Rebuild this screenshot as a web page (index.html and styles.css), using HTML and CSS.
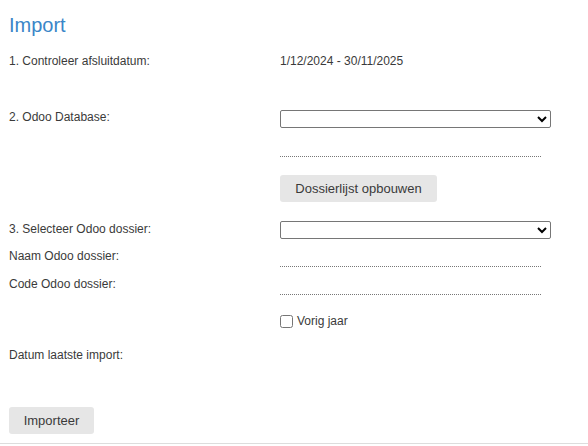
FILE: index.html
```html
<!DOCTYPE html>
<html>
<head>
  <title>Import</title>
  <link rel="stylesheet" href="styles.css">
</head>
<body>
  <div class="page">
    <h1 class="title">Import</h1>

    <div class="row row-date">
      <span class="label">1. Controleer afsluitdatum:</span>
      <span class="value">1/12/2024 - 30/11/2025</span>
    </div>

    <div class="row row-db">
      <span class="label">2. Odoo Database:</span>
      <select class="select"></select>
    </div>

    <div class="row row-dbname">
      <span class="label"></span>
      <div class="field field-short"></div>
    </div>

    <div class="row row-build">
      <span class="label"></span>
      <button class="btn btn-build">Dossierlijst opbouwen</button>
    </div>

    <div class="row row-dossier">
      <span class="label">3. Selecteer Odoo dossier:</span>
      <select class="select select-dossier"></select>
    </div>

    <div class="row row-naam">
      <span class="label">Naam Odoo dossier:</span>
      <div class="field field-tall"></div>
    </div>

    <div class="row row-code">
      <span class="label">Code Odoo dossier:</span>
      <div class="field field-tall"></div>
    </div>

    <div class="row row-check">
      <span class="label"></span>
      <label class="check"><input type="checkbox"> Vorig jaar</label>
    </div>

    <div class="row row-last">
      <span class="label">Datum laatste import:</span>
      <span class="value"></span>
    </div>

    <div class="actions">
      <button class="btn btn-import">Importeer</button>
    </div>
  </div>
</body>
</html>
```

FILE: styles.css
```css
body {
  margin: 0;
  font-family: "Liberation Sans", Arial, sans-serif;
  font-size: 12px;
  color: #3a3a3a;
  background: #fff;
}

.page {
  padding: 14px 9px 9px;
  border-bottom: 1px solid #ddd;
}

.title {
  margin: 0;
  font-size: 20px;
  font-weight: normal;
  line-height: 23px;
  color: #3a86c8;
}

.row {
  display: flex;
  align-items: flex-start;
  line-height: 18px;
}

.label {
  width: 271px;
  flex-shrink: 0;
}

.row-date { margin-top: 15px; }
.row-db { margin-top: 38px; }
.row-dbname { margin-top: 10px; }
.row-build { margin-top: 18px; }
.row-dossier { margin-top: 18px; }
.row-naam { margin-top: 8px; }
.row-code { margin-top: 8px; }
.row-check { margin-top: 17px; }
.row-last { margin-top: 16px; }

.select {
  width: 271px;
  height: 18px;
  margin: 2px 0 0;
  padding: 0;
  font-family: inherit;
  font-size: 12px;
  border: 1px solid #767676;
  border-radius: 2px;
  background: #fff;
}

.select-dossier {
  margin-top: 1px;
}

.field {
  width: 261px;
  border-bottom: 1px dotted #777;
}

.field-short { height: 18px; }
.field-tall { height: 19px; }

.btn {
  height: 27px;
  border: none;
  border-radius: 3px;
  background: #e6e6e6;
  color: #3a3a3a;
  font-family: inherit;
  font-size: 13px;
  cursor: pointer;
}

.btn-build {
  width: 157px;
}

.btn-import {
  width: 85px;
}

.check {
  display: flex;
  align-items: flex-start;
  gap: 4px;
}

.check input {
  width: 13px;
  height: 13px;
  margin: 3px 0 0;
}

.actions {
  margin-top: 43px;
}
```
